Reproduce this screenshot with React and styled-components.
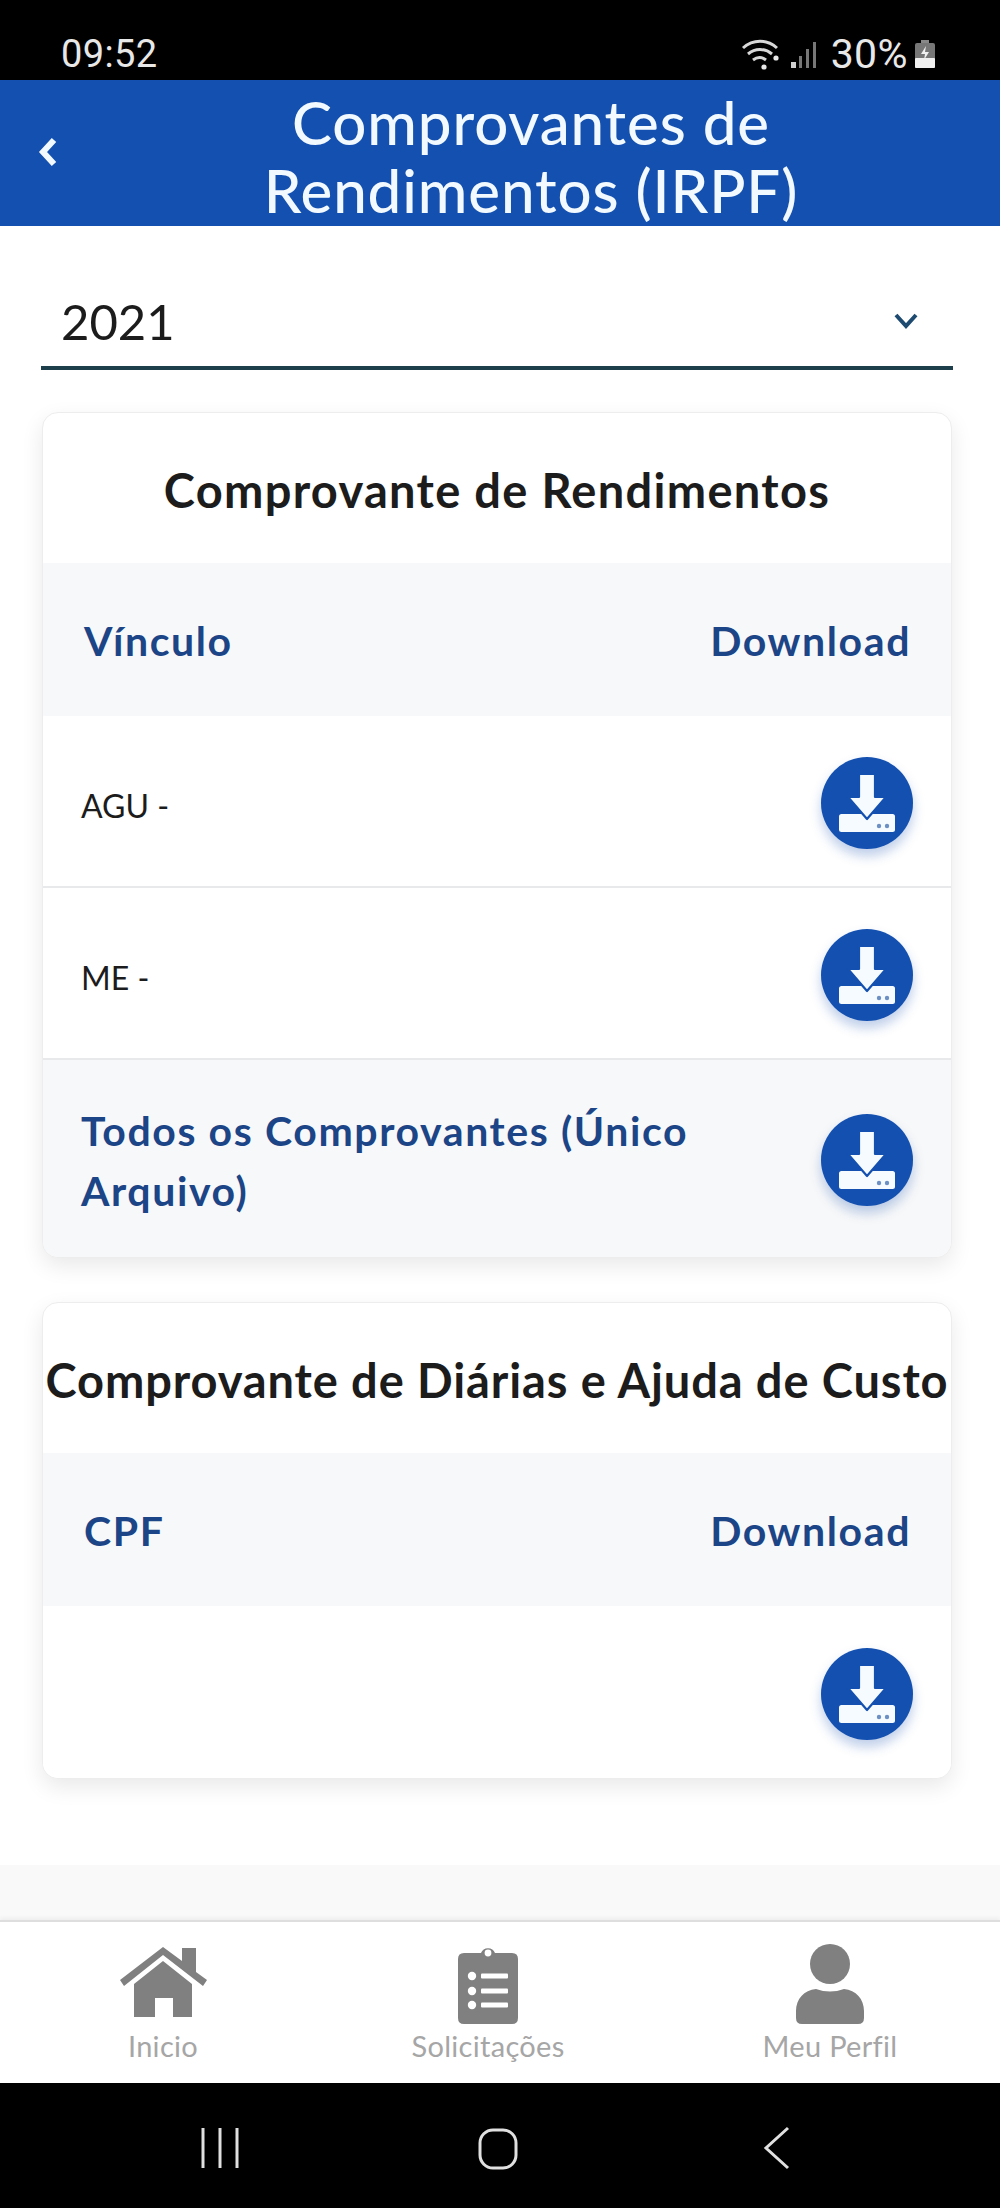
import React from "react";
import styled, { createGlobalStyle } from "styled-components";

const Global = createGlobalStyle`
  html, body { margin: 0; padding: 0; background: #fff; }
  * { box-sizing: border-box; }
`;

const font = `"Lato", "Noto Sans", "Liberation Sans", sans-serif`;
const BLUE = "#1450b0";

const Phone = styled.div`
  width: 1000px;
  height: 2208px;
  display: flex;
  flex-direction: column;
  background: #fff;
  font-family: ${font};
  overflow: hidden;
`;
const StatusBar = styled.div`
  height: 80px;
  flex: none;
  background: #000;
  color: #e8e8e8;
  display: flex;
  align-items: center;
  justify-content: space-between;
  padding: 28px 64px 0 61px;
  font-family: "Roboto", sans-serif;
  font-size: 38px;
  letter-spacing: 0.4px;
`;
const StatusRight = styled.div`
  display: flex;
  align-items: center;
  gap: 8px;
`;
const Percent = styled.span`
  margin: 0 -2px 0 4px;
  font-size: 41px;
`;
const Header = styled.header`
  height: 146px;
  flex: none;
  background: ${BLUE};
  display: flex;
  align-items: center;
  padding-left: 36px;
  color: #f2f9ff;
`;
const BackIcon = styled.svg`
  width: 26px;
  height: 32px;
  flex: none;
  margin-top: -2px;
`;
const Title = styled.h1`
  flex: 1;
  margin: 0;
  padding-top: 5px;
  text-align: center;
  font-size: 60px;
  line-height: 68px;
  font-weight: 500;
  letter-spacing: 0.9px;
  white-space: nowrap;
`;
const Main = styled.main`
  flex: 1;
  padding: 0 48px 0 42px;
  display: flex;
  flex-direction: column;
  gap: 44px;
`;
const Select = styled.div`
  margin: 64px -1px -2px -1px;
  height: 80px;
  flex: none;
  border-bottom: 4px solid #1d3f4c;
  display: flex;
  align-items: center;
  justify-content: space-between;
  padding: 0 34px 14px 20px;
  color: #1c1c1c;
  font-size: 49px;
`;
const Chevron = styled.svg`
  width: 26px;
  height: 18px;
`;
const Card = styled.section`
  background: #fff;
  border: 1px solid #ededed;
  border-radius: 16px;
  box-shadow: 0 8px 22px rgba(0, 0, 0, 0.09);
  overflow: hidden;
  display: flex;
  flex-direction: column;
`;
const CardTitle = styled.h2`
  height: 150px;
  margin: 0;
  padding-top: 3px;
  flex: none;
  display: flex;
  align-items: center;
  justify-content: center;
  white-space: nowrap;
  font-size: 47px;
  letter-spacing: ${(p) => p.$tracking ?? 0.9}px;
  font-weight: 700;
  color: #1c1c1c;
`;
const HeadRow = styled.div`
  height: 153px;
  background: #f7f8f9;
  display: flex;
  align-items: center;
  justify-content: space-between;
  padding: 2px 40px 0 41px;
  color: #1c4587;
  font-size: 41px;
  letter-spacing: 1.6px;
  font-weight: 700;
`;
const Row = styled.div`
  height: ${(p) => p.$h || 172}px;
  display: flex;
  align-items: center;
  justify-content: space-between;
  padding: 0 38px;
  background: ${(p) => (p.$shaded ? "#f7f8f9" : "#fff")};
  border-bottom: ${(p) => (p.$line ? "2px solid #e8e9ea" : "none")};
`;
const RowText = styled.span`
  font-size: 32px;
  color: #1c1c1c;
  padding-top: 8px;
`;
const RowLink = styled.span`
  width: 640px;
  padding-top: 4px;
  font-size: 41px;
  letter-spacing: 1.6px;
  line-height: 60px;
  font-weight: 700;
  color: #1c4587;
`;
const DownloadButton = styled.button`
  width: 92px;
  height: 92px;
  padding: 0;
  border: 0;
  margin-top: 3px;
  border-radius: 50%;
  background: ${BLUE};
  box-shadow: 0 7px 12px rgba(20, 80, 176, 0.28);
  flex: none;
  display: block;
`;
const Strip = styled.div`
  height: 55px;
  flex: none;
  background: #f9f9f9;
`;
const BottomNav = styled.nav`
  height: 163px;
  flex: none;
  background: #fff;
  border-top: 2px solid #dedede;
  box-shadow: 0 -2px 4px rgba(0, 0, 0, 0.05);
  display: grid;
  grid-template-columns: 326px 324px 350px;
  position: relative;
`;
const NavItem = styled.div`
  display: flex;
  flex-direction: column;
  align-items: center;
  padding-top: 22px;
  padding-left: ${(p) => p.$shift || 0}px;
  color: #a6a6a6;
  font-size: 29px;
  letter-spacing: 0.3px;
`;
const NavIcon = styled.svg`
  width: ${(p) => p.$w}px;
  height: 80px;
  flex: none;
  margin-bottom: 4px;
`;
const AndroidBar = styled.div`
  height: 125px;
  flex: none;
  background: #000;
  display: flex;
  align-items: center;
  padding-left: 200px;
  gap: 238px;
`;
const AndroidIcon = styled.svg`
  width: 40px;
  height: 44px;
  flex: none;
  margin-top: 4px;
`;

const DownloadIcon = () => (
  <svg width="92" height="92" viewBox="0 0 92 92">
    <rect x="18" y="57" width="56" height="18" rx="2.5" fill="#f6fbff" />
    <path
      d="M38 17h16v23h11L46 62 27 40h11z"
      fill="#f6fbff"
      stroke={BLUE}
      strokeWidth="2.2"
      strokeLinejoin="round"
    />
    <circle cx="58" cy="69" r="2.2" fill="#6c8fc4" />
    <circle cx="66" cy="69" r="2.2" fill="#6c8fc4" />
  </svg>
);

const Download = () => (
  <DownloadButton aria-label="Download">
    <DownloadIcon />
  </DownloadButton>
);

const HomeIcon = () => (
  <NavIcon $w={92} viewBox="0 0 92 80">
    <path d="M3 36 46 3l19 14V4h14v24l11 8-4 6L46 11 7 42z" fill="#808080" />
    <path d="M46 17l29 23v33H56V54H38v19H17V40z" fill="#808080" />
  </NavIcon>
);
const ClipboardIcon = () => (
  <NavIcon $w={60} viewBox="0 0 60 80">
    <path
      d="M6 9h17a7.5 7.5 0 0 1 14 0h17q6 0 6 6v59q0 6-6 6H6q-6 0-6-6V15q0-6 6-6z"
      fill="#808080"
    />
    <circle cx="30" cy="9" r="3.4" fill="#fff" />
    <circle cx="14" cy="32" r="4.2" fill="#fff" />
    <circle cx="14" cy="47" r="4.2" fill="#fff" />
    <circle cx="14" cy="61" r="4.2" fill="#fff" />
    <rect x="23" y="29.5" width="27" height="5" rx="1" fill="#fff" />
    <rect x="23" y="44.5" width="27" height="5" rx="1" fill="#fff" />
    <rect x="23" y="58.5" width="27" height="5" rx="1" fill="#fff" />
  </NavIcon>
);
const PersonIcon = () => (
  <NavIcon $w={70} viewBox="0 0 70 80">
    <circle cx="35" cy="20" r="20" fill="#808080" />
    <path
      d="M21 45q14 5 28 0c12 1 20 10 20 22v7q0 6-6 6H7q-6 0-6-6v-7c0-12 8-21 20-22z"
      fill="#808080"
    />
  </NavIcon>
);

const WifiIcon = () => (
  <svg width="42" height="34" viewBox="0 0 42 34" fill="none" stroke="#d8d8d8" strokeWidth="3">
    <path d="M2 11C12 2 26 2 36 11" />
    <path d="M7 17C14 11 24 11 31 17" />
    <path d="M12 23c4-3 9-3 13 0" />
    <circle cx="23" cy="30" r="2.6" fill="#e8e8e8" stroke="none" />
    <circle cx="35" cy="21" r="2.6" fill="#e8e8e8" stroke="none" />
  </svg>
);
const SignalIcon = () => (
  <svg width="28" height="30" viewBox="0 0 28 30">
    <rect x="0" y="23" width="5" height="6" fill="#cfcfcf" />
    <rect x="8" y="17" width="3" height="12" fill="#777" />
    <rect x="15" y="10" width="3" height="19" fill="#777" />
    <rect x="22" y="3" width="3" height="26" fill="#777" />
  </svg>
);
const BatteryIcon = () => (
  <svg width="22" height="30" viewBox="0 0 22 30">
    <rect x="7" y="1" width="8" height="3" fill="#888" />
    <rect x="1" y="4" width="20" height="25" rx="2" fill="#777" />
    <rect x="1" y="19" width="20" height="10" rx="1" fill="#f0f0f0" />
    <path d="M12 7l-5 8h4l-1 6 5-8h-4z" fill="#f0f0f0" />
  </svg>
);

export default function App() {
  return (
    <Phone>
      <Global />
      <StatusBar>
        <span>09:52</span>
        <StatusRight>
          <WifiIcon />
          <SignalIcon />
          <Percent>30%</Percent>
          <BatteryIcon />
        </StatusRight>
      </StatusBar>
      <Header>
        <BackIcon viewBox="0 0 26 32">
          <path d="M18 4 7 16l11 12" fill="none" stroke="#f2f9ff" strokeWidth="6" />
        </BackIcon>
        <Title>
          Comprovantes de
          <br />
          Rendimentos (IRPF)
        </Title>
      </Header>
      <Main>
        <Select>
          <span>2021</span>
          <Chevron viewBox="0 0 26 18">
            <path d="M3 3l10 11L23 3" fill="none" stroke="#1d4a70" strokeWidth="4" />
          </Chevron>
        </Select>
        <Card>
          <CardTitle $tracking={1.3}>Comprovante de Rendimentos</CardTitle>
          <HeadRow>
            <span>Vínculo</span>
            <span>Download</span>
          </HeadRow>
          <Row $line>
            <RowText>AGU -</RowText>
            <Download />
          </Row>
          <Row $line>
            <RowText>ME -</RowText>
            <Download />
          </Row>
          <Row $shaded $h={197}>
            <RowLink>Todos os Comprovantes (Único Arquivo)</RowLink>
            <Download />
          </Row>
        </Card>
        <Card>
          <CardTitle>Comprovante de Diárias e Ajuda de Custo</CardTitle>
          <HeadRow>
            <span>CPF</span>
            <span>Download</span>
          </HeadRow>
          <Row>
            <span />
            <Download />
          </Row>
        </Card>
      </Main>
      <Strip />
      <BottomNav>
        <NavItem>
          <HomeIcon />
          Inicio
        </NavItem>
        <NavItem>
          <ClipboardIcon />
          Solicitações
        </NavItem>
        <NavItem $shift={10}>
          <PersonIcon />
          Meu Perfil
        </NavItem>
      </BottomNav>
      <AndroidBar>
        <AndroidIcon viewBox="0 0 40 44">
          <path d="M3 2v40M20 2v40M37 2v40" stroke="#e0e0e0" strokeWidth="3" fill="none" />
        </AndroidIcon>
        <AndroidIcon viewBox="0 0 40 44">
          <rect x="2" y="4" width="36" height="38" rx="13" stroke="#e0e0e0" strokeWidth="3" fill="none" />
        </AndroidIcon>
        <AndroidIcon viewBox="0 0 40 44">
          <path d="M32 2 10 22l22 20" stroke="#e0e0e0" strokeWidth="3" fill="none" />
        </AndroidIcon>
      </AndroidBar>
    </Phone>
  );
}
